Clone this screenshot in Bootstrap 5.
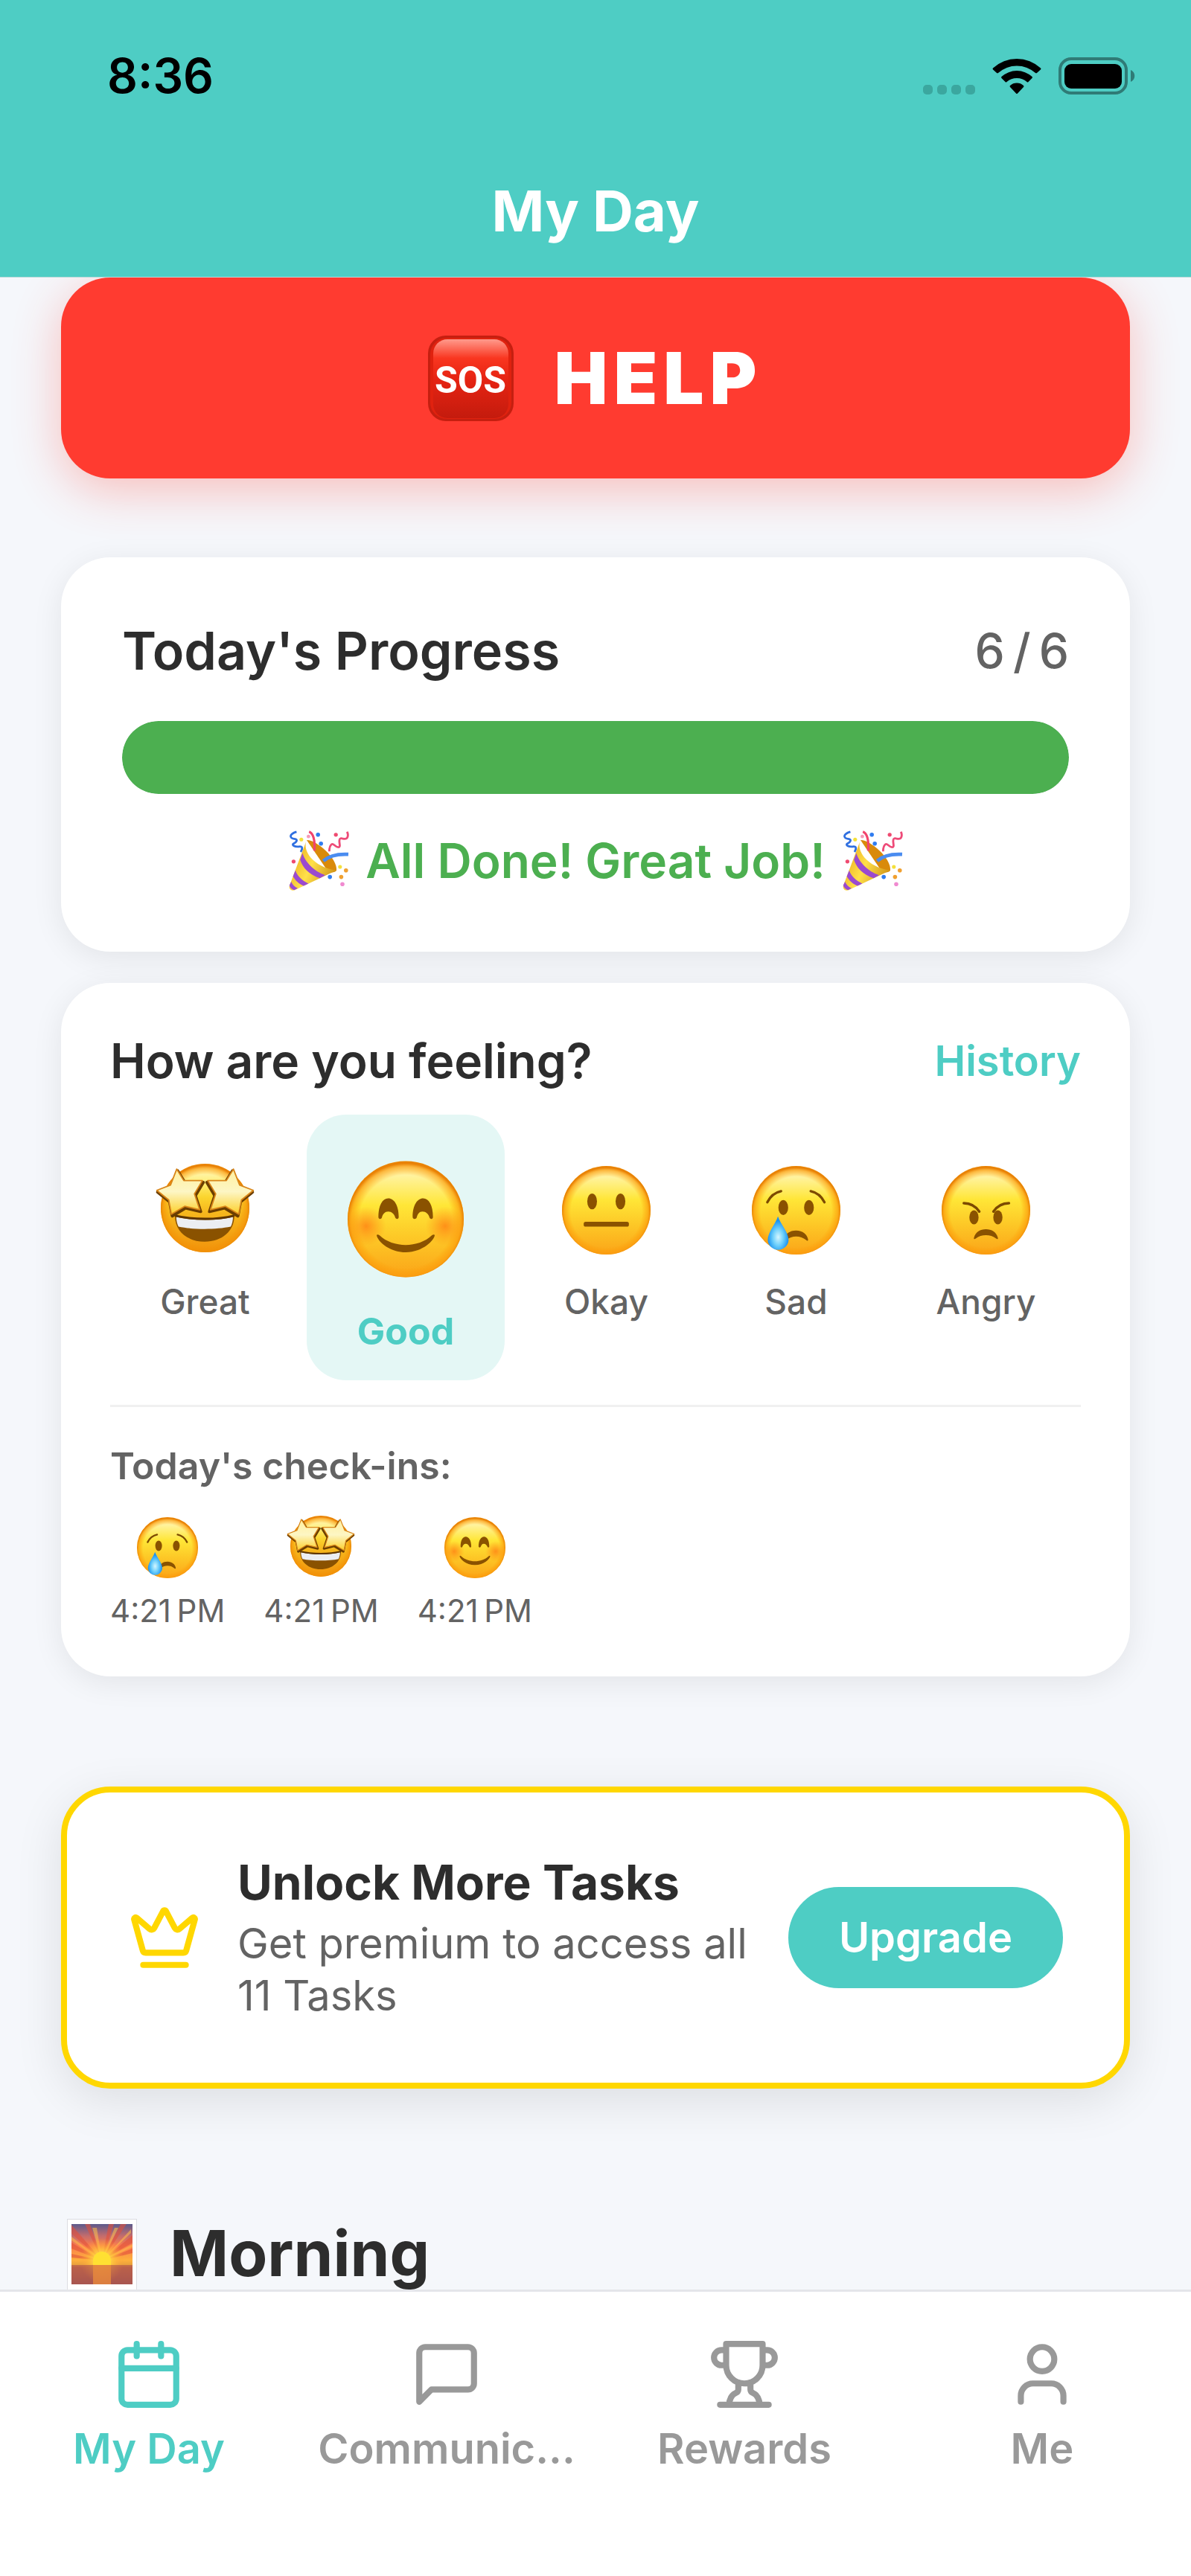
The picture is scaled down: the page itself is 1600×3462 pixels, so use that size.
<!DOCTYPE html>
<html lang="en">
<head>
<meta charset="utf-8">
<meta name="viewport" content="width=device-width, initial-scale=1">
<title>My Day</title>
<link href="https://cdn.jsdelivr.net/npm/bootstrap@5.3.0/dist/css/bootstrap.min.css" rel="stylesheet">
<style>
  :root { --teal: #4ecdc4; --ink: #2d2d2d; --muted: #636363; --tab: #999; --gutter: 82px; }
  body { font-family: Inter, "Liberation Sans", sans-serif; background: #f5f7fb; color: var(--ink); }
  svg { display: block; flex: none; overflow: visible; }
  .sprite { position: absolute; }
  .teal-text { color: var(--teal); }
  .muted-text { color: var(--muted); }

  .app-header { background: var(--teal); border-bottom: 1px solid #b9d8d8; }
  .status-row { height: 195px; padding: 8px 75px 0 144px; }
  .clock { font-size: 64px; line-height: 78px; font-weight: 600; color: #000; }
  .status-icons { gap: 23px; }
  .page-title { font-size: 76px; line-height: 177px; font-weight: 700; }

  .scroller { min-height: 0; padding: 0 var(--gutter); scrollbar-width: none; }
  .panel { background: #fff; border-radius: 66px; box-shadow: 0 8px 40px rgba(0,0,0,.08); }

  .help-btn { height: 270px; gap: 54px; border: 0; border-radius: 66px; background: #ff3b30; color: #fff;
    font-size: 96px; font-weight: 900; letter-spacing: 8px; box-shadow: 0 16px 64px rgba(255,59,48,.3); }
  .help-btn:hover { background: #ff3b30; color: #fff; }

  .progress-panel { margin-top: 106px; padding: 82px; }
  .progress-panel h2 { font-size: 70px; line-height: 88px; font-weight: 600; }
  .count { font-size: 64px; line-height: 88px; font-weight: 500; }
  .day-bar { height: 98px; margin: 50px 0; border-radius: 49px; }
  .day-bar .progress-bar { background: #4caf50; border-radius: 49px; }
  .cheer { font-size: 64px; line-height: 78px; font-weight: 600; color: #4caf50; gap: 22px; }

  .mood-panel { margin-top: 42px; padding: 66px; }
  .mood-panel h2 { font-size: 64px; line-height: 78px; font-weight: 600; }
  .history { font-size: 56px; line-height: 78px; font-weight: 600; text-decoration: none; }
  .moods { margin: 33px 0; }
  .mood { border: 0; background: none; padding: 69px 59px 0; gap: 34px; border-radius: 53px;
    font-size: 46px; line-height: 58px; font-weight: 500; color: var(--muted); white-space: nowrap; }
  .mood span { margin: 0 -30px; }
  .mood.picked { background: #e4f7f5; color: var(--teal); font-size: 50px; font-weight: 700; padding: 62px 55px 37px; gap: 43px; }
  .checkins { border-top: 3px solid #f0f0f0; padding-top: 50px; }
  .checkins h3 { font-size: 50px; line-height: 58px; font-weight: 600; margin-bottom: 40px; }
  .checkin-list { gap: 52px; }
  .checkin { gap: 22px; font-size: 42px; line-height: 44px; }

  .premium { margin-top: 148px; padding: 82px; gap: 49px; border: 8px solid gold; box-shadow: 0 16px 64px rgba(0,0,0,.1); }
  .premium h2 { font-size: 64px; line-height: 78px; font-weight: 700; margin-bottom: 8px; }
  .premium p { font-size: 56px; line-height: 70px; }
  .upgrade { background: var(--teal); color: #fff; border: 0; border-radius: 68px; padding: 0 68px;
    font-size: 56px; line-height: 136px; font-weight: 600; }
  .section-head { margin-top: 169px; gap: 44px; }
  .section-head h2 { font-size: 85px; line-height: 106px; font-weight: 700; }

  .tab-bar { background: #fff; border-top: 3px solid #e4e5ea; padding: 62px 0 136px; }
  .tab { gap: 16px; color: var(--tab); text-decoration: none; font-size: 56px; line-height: 70px; font-weight: 600; }
  .tab.active { color: var(--teal); }
  .line-icon { fill: none; stroke: currentColor; stroke-width: 2; stroke-linecap: round; stroke-linejoin: round; }
  .crown { color: gold; }
</style>
</head>
<body class="d-flex flex-column vh-100">

<svg class="sprite" width="0" height="0" aria-hidden="true">
  <defs>
    <linearGradient id="skin" x1="0" y1="0" x2="0" y2="1">
      <stop offset="0" stop-color="#fff3a8"/><stop offset=".12" stop-color="#fff3a0"/><stop offset=".38" stop-color="#ffe637"/>
      <stop offset=".65" stop-color="#fdc927"/><stop offset="1" stop-color="#fba418"/>
    </linearGradient>
    <radialGradient id="rim" cx=".5" cy=".52" r=".5">
      <stop offset=".8" stop-color="#f90" stop-opacity="0"/><stop offset=".94" stop-color="#fb9a0c" stop-opacity=".65"/><stop offset="1" stop-color="#e98206"/>
    </radialGradient>
    <linearGradient id="shade" x1="0" y1="0" x2="0" y2="1"><stop offset=".2" stop-color="#e88400" stop-opacity="0"/><stop offset=".55" stop-color="#e88400" stop-opacity=".35"/><stop offset="1" stop-color="#e88400" stop-opacity=".5"/></linearGradient>
    <radialGradient id="blush"><stop offset="0" stop-color="#ff7a12" stop-opacity=".75"/><stop offset="1" stop-color="#ff8a12" stop-opacity="0"/></radialGradient>
    <linearGradient id="starfill" x1="0" y1="0" x2="0" y2="1"><stop offset="0" stop-color="#fff0a0"/><stop offset=".5" stop-color="#fdf6c4"/><stop offset="1" stop-color="#fcd02a"/></linearGradient>
    <radialGradient id="teardrop" cx=".5" cy=".62" r=".5"><stop offset="0" stop-color="#d5f6ff"/><stop offset=".5" stop-color="#6fd0fb"/><stop offset="1" stop-color="#1a92f0"/></radialGradient>
    <linearGradient id="sosfill" x1="0" y1="0" x2="0" y2="1"><stop offset="0" stop-color="#ff9a8c"/><stop offset=".24" stop-color="#f93620"/><stop offset=".5" stop-color="#e62413"/><stop offset="1" stop-color="#c41b0d"/></linearGradient>
    <linearGradient id="cone" x1="0" y1=".3" x2="1" y2=".8"><stop offset="0" stop-color="#e8a91c"/><stop offset=".45" stop-color="#ffe04a"/><stop offset="1" stop-color="#c98a10"/></linearGradient>
    <linearGradient id="dawn" x1="0" y1="0" x2="0" y2="1"><stop offset="0" stop-color="#5c5a8c"/><stop offset=".2" stop-color="#c56c6c"/><stop offset=".36" stop-color="#fb7c4c"/><stop offset=".6" stop-color="#fdb03c"/><stop offset=".68" stop-color="#e8a03c"/><stop offset=".72" stop-color="#c06a48"/><stop offset="1" stop-color="#84465a"/></linearGradient>
    <radialGradient id="glow"><stop offset="0" stop-color="#fff27a"/><stop offset=".5" stop-color="#ffc53c" stop-opacity=".8"/><stop offset="1" stop-color="#ff9a3c" stop-opacity="0"/></radialGradient>
    <clipPath id="photo"><rect x="6" y="7" width="82" height="81"/></clipPath>
  </defs>

  <symbol id="face" viewBox="0 0 100 100" overflow="visible"><circle cx="50" cy="50" r="50" fill="url(#skin)"/><circle cx="50" cy="50" r="50" fill="url(#rim)"/></symbol>

  <symbol id="e-good" viewBox="0 0 100 100" overflow="visible">
    <use href="#face" width="100" height="100"/>
    <circle cx="16" cy="56" r="17" fill="url(#blush)"/><circle cx="84" cy="56" r="17" fill="url(#blush)"/>
    <g fill="#8a5200"><path d="M26.500 48C26.500 38 30 32 35 32s9 6 9 16c0 2-2 2.500-3 .5-1-3-3-5-6-5s-4.500 2-5.500 5c-.8 2-3 1.500-3-.5Z"/><path d="M56 48C56 38 60 32 65 32s8.500 6 8.500 16c0 2-2 2.500-3 .5-1-3-3-5-6-5s-4 2-5 5c-1 2-3.500 1.500-3.500-.5Z"/>
    <path d="M25 64c0-1 1.500-1 2.500 0C39 75 61 75 72.500 64c1-1 2.500-1 2.500 0-.5 4-10 14.500-25 14.500S25.500 68 25 64Z"/></g>
  </symbol>

  <symbol id="e-okay" viewBox="0 0 100 100" overflow="visible">
    <use href="#face" width="100" height="100"/>
    <g fill="#8a5200"><ellipse cx="34" cy="40" rx="5.500" ry="9"/><ellipse cx="66" cy="40" rx="5.500" ry="9"/><rect x="24.500" y="63" width="51" height="5.500" rx="2.200"/></g>
  </symbol>

  <symbol id="e-sad" viewBox="0 0 100 100" overflow="visible">
    <use href="#face" width="100" height="100"/>
    <g fill="#8a5200"><ellipse cx="35.500" cy="47" rx="5.500" ry="8.500"/><ellipse cx="64.500" cy="47" rx="5.500" ry="8.500"/>
    <path d="M36.500 83c1-6 6-10 13.500-10s12.500 4.500 13.500 10c.2 1.800-1 1.800-2.200.7-6.500-5.500-16-5.500-22.600 0-1.200 1.100-2.400 1.100-2.200-.7Z"/></g>
    <g fill="none" stroke="#7c4a00" stroke-width="2.800" stroke-linecap="round"><path d="M17.500 41C21 34 26 30 33 28.500M82 41C78.500 34 73.500 30 66.500 28.500"/></g>
    <path d="M29.500 57c3 9 12 18 12 27a11.800 11.800 0 0 1-23.500 0c0-9 8.500-18 11.500-27Z" fill="url(#teardrop)"/>
  </symbol>

  <symbol id="e-angry" viewBox="0 0 100 100" overflow="visible">
    <use href="#face" width="100" height="100"/>
    <g fill="#8a5200"><ellipse cx="36.500" cy="58" rx="5.200" ry="8"/><ellipse cx="63.500" cy="58" rx="5.200" ry="8"/>
    <path d="M36.500 81c2-6.500 7-9.500 13.500-9.500S61.500 74.500 63.500 81c.4 1.800-.8 2-2 .9-6.500-5-16.500-5-23 0-1.200 1.100-2.400.9-2-.9Z"/></g>
    <g fill="none" stroke="#7c4a00" stroke-width="2.900" stroke-linecap="round"><path d="M25 42c8 0 13.500 3.500 17.500 9.500M76 42c-8 0-13.500 3.500-17.500 9.500"/></g>
  </symbol>

  <symbol id="e-great" viewBox="0 0 100 100" overflow="visible">
    <g transform="translate(0 -2.500)">
      <use href="#face" width="100" height="100"/>
      <circle cx="50" cy="50" r="50" fill="url(#shade)"/>
      <path d="M16 59c20 5 48 5 67 0 0 17-14 29-33.500 29S16 76 16 59Z" fill="#8a5200"/>
      <path d="M17.500 60c20 4.500 46 4.500 64 0 0 4-1 8-2.500 11-16 3.500-43 3.500-59 0-1.500-3-2.500-7-2.500-11Z" fill="#eceef2"/>
      <path d="M16 58.500c20 5 48 5 67 0" fill="none" stroke="#5e3600" stroke-width="2.500"/>
      <g id="one-star"><path d="M18 6 26 19 47 19 38 34 44 52 27 48 12 57 9 41-4.500 30 11 24Z" fill="#6b3e00" stroke="#6b3e00" stroke-width="3.500" stroke-linejoin="round" transform="translate(1 2)"/>
      <path d="M18 6 26 19 47 19 38 34 44 52 27 48 12 57 9 41-4.500 30 11 24Z" fill="url(#starfill)" stroke="#d9861a" stroke-width="1.500" stroke-linejoin="round"/></g>
      <use href="#one-star" transform="matrix(-1 0 0 1 100 0)"/>
    </g>
  </symbol>

  <symbol id="e-party" viewBox="0 0 100 100" overflow="visible">
    <path d="M30 15C45 14 82 45 80 66 78 70 70 70 66 68Z" fill="#d98a0a"/>
    <path d="M30 15C22 32 40 60 80 66L10 99c-5 2-10-1-9-7Z" fill="url(#cone)"/>
    <path d="M23 37c4 15 20 31 38 37l-9 5C34 73 23 61 19 48ZM11 66c3 9 11 17 22 22l-8 4C17 89 11 83 7 76ZM4 85c2 5 6 9 11 11l-6 3c-4-1-7-4-8-8Z" fill="#9a4ad0"/>
    <path d="M34 1c8 3 10 14 9 32" fill="none" stroke="#f2436c" stroke-width="4"/>
    <path d="M58 50c10-9 23-12 42-11" fill="none" stroke="#4a8cf0" stroke-width="6"/>
    <path d="M13 1C0 5 1 12 9 13s3 6-1 8 2 6 9 5 6 4 3 9" fill="none" stroke="#2f6fe0" stroke-width="3.500"/>
    <path d="M98 1c3 8 0 12-4 12s-8-3-9 2 3 12-2 12-8-7-11-5-4 6-4 12" fill="none" stroke="#ee4b78" stroke-width="3.500"/>
    <g fill="#2f7cf0"><circle cx="49" cy="6" r="3.500"/><circle cx="54" cy="21" r="3.500"/><circle cx="69" cy="77" r="3.500"/></g>
    <g fill="#f4e03a"><circle cx="21" cy="14" r="3.200"/><circle cx="86" cy="60" r="3.200"/></g>
    <g fill="#f0a030"><circle cx="96" cy="66" r="3.500"/><circle cx="88" cy="77" r="3.500"/></g>
    <g fill="#ef4a70"><circle cx="79" cy="6" r="3.300"/><circle cx="8" cy="51" r="3.300"/></g>
    <g fill="#f08ad0"><circle cx="90" cy="89" r="3.500"/></g><circle cx="33" cy="9" r="3" fill="#f59ab8"/>
  </symbol>
</svg>

<header class="app-header flex-shrink-0">
  <div class="status-row d-flex align-items-center justify-content-between">
    <time class="clock">8:36</time>
    <div class="status-icons d-flex align-items-center">
      <svg width="70" height="50" viewBox="0 0 70 50" fill="#3ba79f"><rect y="37" width="13" height="13" rx="5"/><rect x="19" y="37" width="13" height="13" rx="5"/><rect x="38" y="37" width="13" height="13" rx="5"/><rect x="57" y="37" width="13" height="13" rx="5"/></svg>
      <svg width="66" height="50" viewBox="0 0 66 50"><path d="M1 14.500Q0 15.500 1 16.500L6 21q1 .8 2 0a37.500 37.500 0 0 1 50 0q1 .8 2 0l5-4.500q1-1 0-2a47 47 0 0 0-64 0ZM12.500 26q-1 1 0 2l5 5q1 1 2 0a20.500 20.500 0 0 1 27 0q1 1 2 0l5-5q1-1 0-2a30.500 30.500 0 0 0-41 0ZM24 38q-1 1 0 2l8 8.500q1 1 2 0L42 40q1-1 0-2a13.500 13.500 0 0 0-18 0Z"/></svg>
      <svg width="103" height="50" viewBox="0 0 103 50"><rect x="2" y="2" width="89" height="46" rx="15" fill="none" stroke="#2f7b76" stroke-width="4"/><rect x="8" y="9" width="77" height="33" rx="9"/><path d="M97 17c7 3 7 13 0 16Z" fill="#2f7b76"/></svg>
    </div>
  </div>
  <h1 class="page-title text-white text-center m-0">My Day</h1>
</header>

<main class="scroller flex-grow-1 overflow-auto">
  <button type="button" class="help-btn btn w-100 d-flex align-items-center justify-content-center">
    <svg width="115" height="115" viewBox="0 0 115 115" aria-hidden="true"><rect width="115" height="115" rx="24" fill="#c51f10"/><rect x="3" y="3" width="109" height="109" rx="22" fill="#e0220f"/><rect x="7" y="5" width="101" height="106" rx="19" fill="url(#sosfill)"/><text x="57" y="77" text-anchor="middle" font-family="Roboto, sans-serif" font-weight="700" font-size="50" letter-spacing="0" fill="#fff">SOS</text></svg>
    <span>HELP</span>
  </button>

  <section class="panel progress-panel">
    <div class="d-flex justify-content-between">
      <h2 class="m-0">Today's Progress</h2>
      <span class="count muted-text">6&#8201;/&#8201;6</span>
    </div>
    <div class="progress day-bar" role="progressbar" aria-label="Today's progress" aria-valuenow="6" aria-valuemin="0" aria-valuemax="6">
      <div class="progress-bar" style="width: 100%"></div>
    </div>
    <div class="cheer d-flex align-items-center justify-content-center">
      <svg width="82" height="80"><use href="#e-party"/></svg><span>All Done! Great Job!</span><svg width="82" height="80"><use href="#e-party"/></svg>
    </div>
  </section>

  <section class="panel mood-panel">
    <div class="d-flex justify-content-between">
      <h2 class="m-0">How are you feeling?</h2>
      <a class="history teal-text" href="#">History</a>
    </div>
    <div class="moods d-flex justify-content-around align-items-start">
      <button type="button" class="mood d-flex flex-column align-items-center"><svg width="119" height="119"><use href="#e-great"/></svg><span>Great</span></button>
      <button type="button" class="mood picked d-flex flex-column align-items-center" aria-pressed="true"><svg width="156" height="157"><use href="#e-good"/></svg><span>Good</span></button>
      <button type="button" class="mood d-flex flex-column align-items-center"><svg width="119" height="119"><use href="#e-okay"/></svg><span>Okay</span></button>
      <button type="button" class="mood d-flex flex-column align-items-center"><svg width="119" height="119"><use href="#e-sad"/></svg><span>Sad</span></button>
      <button type="button" class="mood d-flex flex-column align-items-center"><svg width="119" height="119"><use href="#e-angry"/></svg><span>Angry</span></button>
    </div>
    <div class="checkins muted-text">
      <h3>Today's check-ins:</h3>
      <div class="checkin-list d-flex">
        <div class="checkin d-flex flex-column align-items-center"><svg width="82" height="82"><use href="#e-sad"/></svg><time>4:21&#8201;PM</time></div>
        <div class="checkin d-flex flex-column align-items-center"><svg width="82" height="82"><use href="#e-great"/></svg><time>4:21&#8201;PM</time></div>
        <div class="checkin d-flex flex-column align-items-center"><svg width="82" height="82"><use href="#e-good"/></svg><time>4:21&#8201;PM</time></div>
      </div>
    </div>
  </section>

  <section class="panel premium d-flex align-items-center">
    <svg class="line-icon crown" width="98" height="98" viewBox="0 0 24 24"><path d="M11.562 3.266a.5.5 0 0 1 .876 0L15.390 8.870a1 1 0 0 0 1.516.294L21.183 5.500a.5.5 0 0 1 .798.519l-2.834 10.246a1 1 0 0 1-.956.734H5.810a1 1 0 0 1-.957-.734L2.020 6.020a.5.5 0 0 1 .798-.519l4.276 3.664a1 1 0 0 0 1.516-.294z"/><path d="M5 21h14"/></svg>
    <div class="flex-grow-1">
      <h2>Unlock More Tasks</h2>
      <p class="muted-text m-0">Get premium to access all 11 Tasks</p>
    </div>
    <button type="button" class="upgrade btn flex-shrink-0">Upgrade</button>
  </section>

  <div class="section-head d-flex align-items-center">
    <svg width="102" height="94" viewBox="-8 0 102 94" aria-hidden="true">
      <rect x=".5" y=".5" width="93" height="96" fill="#fff" stroke="#dcdde2"/>
      <g clip-path="url(#photo)"><rect x="6" y="7" width="82" height="81" fill="url(#dawn)"/>
        <path d="M47 56 6 20V8ZM47 56 24 7h7ZM47 56 56 7h7ZM47 56 72 7h8ZM47 56 88 22v10ZM47 56 6 32v8ZM47 56 88 40v6ZM47 56 6 47v5Z" fill="#e0503c" opacity=".6"/>
        <path d="M47 56 6 24v5ZM47 56 34 12h6ZM47 56 64 12h5ZM47 56 86 14v5ZM47 56 88 34v4Z" fill="#ffc04c" opacity=".55"/>
        <circle cx="47" cy="56" r="30" fill="url(#glow)"/><rect x="6" y="62" width="82" height="26" fill="#b85c4c" opacity=".7"/>
        <path d="M35 62V56a12 12 0 0 1 24 0v6Z" fill="#ffe032"/><rect x="35" y="62" width="24" height="26" fill="#e88a3c" opacity=".8"/></g>
    </svg>
    <h2 class="m-0">Morning</h2>
  </div>
</main>

<nav class="tab-bar row g-0 flex-shrink-0" aria-label="Main">
  <a class="tab active col d-flex flex-column align-items-center" href="#" aria-current="page">
    <svg class="line-icon" width="98" height="98" viewBox="0 0 24 24"><rect x="3" y="4" width="18" height="18" rx="2"/><path d="M16 2v4M8 2v4M3 10h18"/></svg>My Day</a>
  <a class="tab col d-flex flex-column align-items-center" href="#">
    <svg class="line-icon" width="98" height="98" viewBox="0 0 24 24"><path d="M21 15a2 2 0 0 1-2 2H7l-4 4V5a2 2 0 0 1 2-2h14a2 2 0 0 1 2 2z"/></svg>Communic...</a>
  <a class="tab col d-flex flex-column align-items-center" href="#">
    <svg class="line-icon" width="98" height="98" viewBox="0 0 24 24"><path d="M6 9H4.500a2.500 2.500 0 0 1 0-5H6M18 9h1.500a2.500 2.500 0 0 0 0-5H18M4 22h16M10 14.660V17c0 .55-.47.98-.97 1.210C7.850 18.750 7 20.240 7 22M14 14.660V17c0 .55.47.98.97 1.210C16.150 18.750 17 20.240 17 22M18 2H6v7a6 6 0 0 0 12 0V2Z"/></svg>Rewards</a>
  <a class="tab col d-flex flex-column align-items-center" href="#">
    <svg class="line-icon" width="98" height="98" viewBox="0 0 24 24"><path d="M19 21v-2a4 4 0 0 0-4-4H9a4 4 0 0 0-4 4v2"/><circle cx="12" cy="7" r="4"/></svg>Me</a>
</nav>

<script src="https://cdn.jsdelivr.net/npm/bootstrap@5.3.0/dist/js/bootstrap.bundle.min.js"></script>
</body>
</html>
